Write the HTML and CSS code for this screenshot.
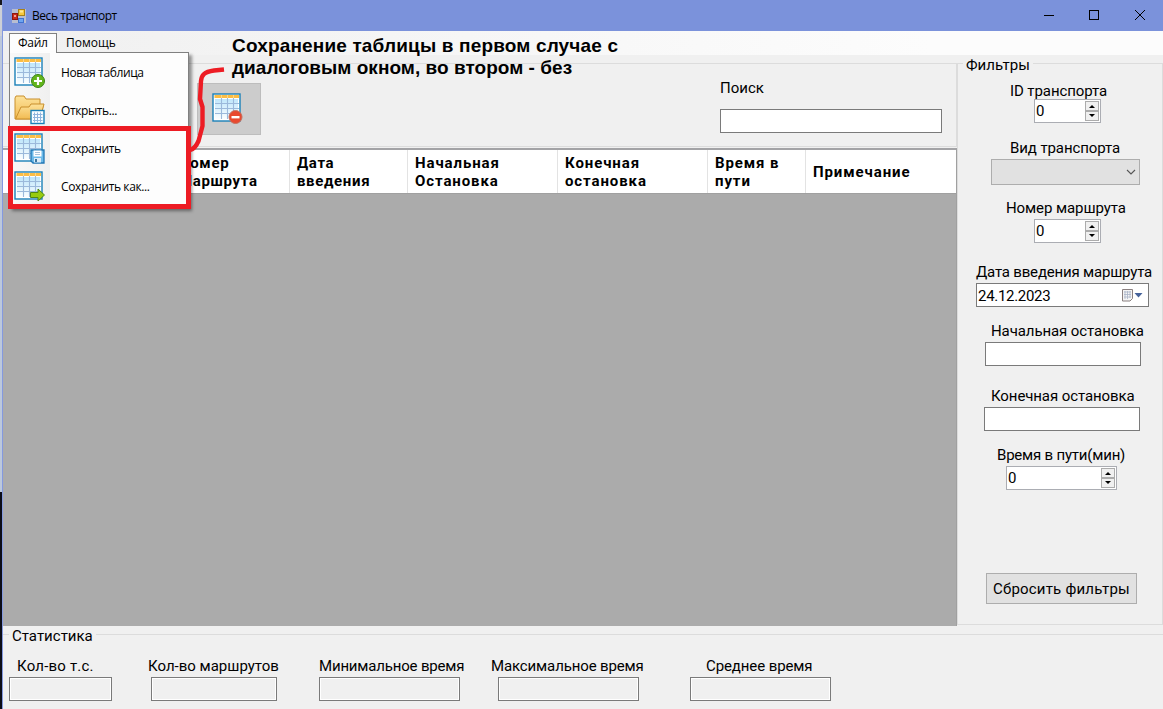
FILE: index.html
```html
<!DOCTYPE html>
<html lang="ru">
<head>
<meta charset="utf-8">
<title>Весь транспорт</title>
<link rel="stylesheet" href="styles.css">
</head>
<body>
<svg class="defs" width="0" height="0">
  <defs>
    <linearGradient id="sky" x1="0" y1="0" x2="0" y2="1"><stop offset="0" stop-color="#bfe6fb"/><stop offset="1" stop-color="#fbfeff"/></linearGradient>
    <linearGradient id="gold" x1="0" y1="0" x2="0" y2="1"><stop offset="0" stop-color="#fde29a"/><stop offset="1" stop-color="#f2bb52"/></linearGradient>
    <g id="sheet">
      <rect x="1" y="2" width="27" height="27" fill="#fff" stroke="#1a80b8" stroke-width="1.4"/>
      <rect x="3" y="7" width="23" height="20" fill="url(#sky)"/>
      <rect x="2.500" y="3" width="24.500" height="3" fill="#fbbd45"/>
      <path d="M3 11.500H27M3 16.500H27M3 21.500H27M9.500 6V27M15.500 6V27M21.500 6V27" stroke="#9bb9db" stroke-width="1.100" fill="none"/>
      <path d="M9.500 3V6M15.500 3V6M21.500 3V6" stroke="#fbd88a" stroke-width="1"/>
    </g>
  </defs>
</svg>
<div class="desktop">
<div class="window">
  <header class="titlebar">
    <svg class="app-icon" width="14" height="14" viewBox="0 0 14 14">
      <rect x="0" y="0" width="14" height="14" fill="#b8bdd0"/>
      <rect x="0.500" y="4.500" width="5" height="6" fill="#c8281c" stroke="#8e1710"/><rect x="2" y="6" width="2" height="2" fill="#f0a090"/>
      <rect x="6.500" y="0.500" width="6" height="6" fill="#f8c83c" stroke="#a88018"/><rect x="8" y="1.500" width="3" height="2" fill="#fde89a"/>
      <rect x="6.500" y="9.500" width="5" height="4" fill="#6da4f0" stroke="#3f72d0"/>
    </svg>
    <span class="title">Весь транспорт</span>
    <svg class="controls" width="110" height="14" viewBox="0 0 110 14">
      <path d="M1 7.500H11" stroke="#000"/>
      <rect x="46.500" y="2.500" width="9" height="9" fill="none" stroke="#000"/>
      <path d="M92 2L102 12M102 2L92 12" stroke="#000" fill="none"/>
    </svg>
  </header>
  <nav class="menubar">
    <div class="menu-tab">Файл</div>
    <div class="menu-item">Помощь</div>
  </nav>
  <div class="workspace">
    <main class="left">
      <section class="toolbar">
        <button class="tool">
          <svg width="32" height="33" viewBox="0 0 32 33"><use href="#sheet"/><circle cx="23.500" cy="25" r="6.500" fill="#e8492f" stroke="#c4705f"/><rect x="19.500" y="24" width="8" height="2.400" fill="#fff"/></svg>
        </button>
        <div class="search"><label>Поиск</label><div class="box"></div></div>
      </section>
      <section class="grid">
        <div class="grid-head">
          <div class="cell c0"></div>
          <div class="cell c1"><span>Номер</span><span>Маршрута</span></div>
          <div class="cell c2"><span>Дата</span><span>введения</span></div>
          <div class="cell c3"><span>Начальная</span><span>Остановка</span></div>
          <div class="cell c3"><span>Конечная</span><span>остановка</span></div>
          <div class="cell c5"><span>Время в</span><span>пути</span></div>
          <div class="cell c6"><span>Примечание</span></div>
        </div>
      </section>
    </main>
    <aside class="filters">
      <div class="legend legend-filters">Фильтры</div>
      <div class="field f1"><label>ID транспорта</label><div class="spin"><span>0</span><i class="arrows"></i></div></div>
      <div class="field f2"><label>Вид транспорта</label><div class="combo"><svg width="10" height="6" viewBox="0 0 10 6"><path d="M1 1L5 5L9 1" fill="none" stroke="#555" stroke-width="1.100"/></svg></div></div>
      <div class="field f3"><label>Номер маршрута</label><div class="spin"><span>0</span><i class="arrows"></i></div></div>
      <div class="field f4"><label>Дата введения маршрута</label><div class="box date"><span>24.12.2023</span>
        <svg width="22" height="13" viewBox="0 0 22 13"><path d="M1.500 .5H11.500V9.500L9 12H1.500Z" fill="#f4f4f4" stroke="#8a8080"/><path d="M3 3H10M3 5.500H10M3 8H10M4 2V10M6.500 2V10M9 2V9" stroke="#a9b4c8" stroke-width=".8"/><path d="M13.500 4H21.500L17.500 8.500Z" fill="#46629a"/></svg></div></div>
      <div class="field f5"><label>Начальная остановка</label><div class="box"></div></div>
      <div class="field f6"><label>Конечная остановка</label><div class="box"></div></div>
      <div class="field f7"><label>Время в пути(мин)</label><div class="spin"><span>0</span><i class="arrows"></i></div></div>
      <button class="reset"><span>Сбросить фильтры</span></button>
    </aside>
  </div>
  <footer class="stats">
    <div class="legend legend-stats">Статистика</div>
    <div class="stat-row">
      <div class="stat s1"><label>Кол-во т.с.</label><div class="box"></div></div>
      <div class="stat s2"><label>Кол-во маршрутов</label><div class="box"></div></div>
      <div class="stat s3"><label>Минимальное время</label><div class="box"></div></div>
      <div class="stat s4"><label>Максимальное время</label><div class="box"></div></div>
      <div class="stat s5"><label>Среднее время</label><div class="box"></div></div>
    </div>
  </footer>
</div>
<div class="dropdown">
  <div class="entry"><svg width="32" height="33" viewBox="0 0 32 33"><use href="#sheet"/><circle cx="24" cy="25" r="6.500" fill="#62b51c" stroke="#3c8418"/><path d="M24 21V29M20 25H28" stroke="#fff" stroke-width="2.200"/></svg><span>Новая таблица</span></div>
  <div class="entry"><svg width="32" height="33" viewBox="0 0 32 33"><path d="M1 25V4L2 2H10L12 5H26V12H29L27 25Z" fill="url(#gold)" stroke="#c98f2c"/><path d="M1.500 25L7 13H15L17 10H30L26 25Z" fill="url(#gold)" stroke="#c98f2c"/><rect x="17" y="16.500" width="13" height="13" fill="#f7fcff" stroke="#1a80b8" stroke-width="1.400"/><path d="M19 20.500H28.500M19 23.500H28.500M19 26.500H28.500M20.500 18.500V28.500M23.500 18.500V28.500M26.500 18.500V28.500" stroke="#8fb4dc"/></svg><span>Открыть...</span></div>
  <div class="entry"><svg width="32" height="33" viewBox="0 0 32 33"><use href="#sheet"/><path d="M17 18H30V31H19L17 29Z" fill="#6dbbea" stroke="#2277b4" stroke-width="1.300"/><rect x="19.500" y="18.500" width="8" height="6" fill="#fff"/><path d="M21 20.500H26M21 22.500H26" stroke="#a8c4dc"/><rect x="20" y="26" width="7" height="4.500" fill="#dcecf8"/><rect x="21" y="27" width="2" height="3" fill="#3c759e"/></svg><span>Сохранить</span></div>
  <div class="entry"><svg width="32" height="33" viewBox="0 0 32 33"><use href="#sheet"/><path d="M16.500 22.500H24V19L30.500 25L24 31V27.500H16.500Z" fill="#98cb10" stroke="#4f8715"/></svg><span>Сохранить как...</span></div>
</div>
<div class="highlight"></div>
<svg class="pointer" width="50" height="100" viewBox="185 60 50 100"><path d="M224 69.500L214 70.500C204 72 201.500 75 201 81L200 99L202.500 107V126L198.500 141Q195 149 190 150" fill="none" stroke="#ed1c24" stroke-width="4.400" stroke-linejoin="round"/></svg>
<div class="caption"><div class="cap1">Сохранение таблицы в первом случае с</div><div class="cap2">диалоговым окном, во втором - без</div></div>
</div>
</body>
</html>
```
FILE: styles.css
```css
* { box-sizing: border-box; }
body { margin: 0; overflow: hidden; background: #f0f0f0; color: #000; font-family: Roboto, sans-serif; font-size: 15px; }
.defs { position: absolute; }
.desktop { position: relative; width: 1163px; height: 709px; padding-left: 2px; background: linear-gradient(#15161c 0 5px, #cdd0d6 5px 36px, #bcc8dc 36px 492px, #0c0d18 492px); }
.window { display: flex; flex-direction: column; height: 709px; background: #f0f0f0; border-left: 1px solid #8499df; }
.titlebar { display: flex; align-items: center; height: 31px; flex: none; background: #7b92db; padding: 0 10px 0 9px; }
.title { margin-left: 6px; font: 12px "Open Sans", sans-serif; letter-spacing: -.45px; }
.controls { margin-left: auto; margin-top: -1px; }
.menubar { display: flex; height: 24px; flex: none; padding: 2px 0 0 6px; background: linear-gradient(90deg, #f0f0f0, #fcfcfc 80%); font: 12px/20px "Open Sans", sans-serif; }
.menu-tab { width: 48px; padding-left: 8px; border: 1px solid #808080; border-bottom: 0; background: #fdfdfd; line-height: 18px; letter-spacing: -.3px; }
.menu-item { margin-left: 9px; }
.workspace { display: flex; height: 571px; flex: none; }
.left { width: 954px; display: flex; flex-direction: column; }
.toolbar { display: flex; justify-content: space-between; align-items: flex-start; height: 84px; margin-top: 8px; padding: 19px 14px 0 194px; border: 1px solid #dcdcdc; border-width: 1px 1px 1px 0; }
.tool { width: 64px; height: 52px; padding: 0 2px 2px 0; border: 1px solid #bdbdbd; background: #ccc; display: grid; place-items: center; }
.search { width: 222px; margin-top: -4px; }
.search label { display: block; height: 30px; line-height: 18px; }
.box { height: 24px; border: 1px solid #7a7a7a; background: #fff; }
.grid { flex: 1; margin-top: 1px; background: #ababab; border-top: 2px solid #a3a3a6; border-right: 1px solid #a0a0a0; }
.grid-head { display: flex; height: 44px; background: #fff; border-bottom: 1px solid #a0a0a0; font-weight: 700; line-height: 18px; letter-spacing: .9px; }
.cell { display: flex; flex-direction: column; justify-content: center; padding-left: 7px; border-right: 1px solid #e3e3e3; white-space: nowrap; }
.cell span { width: max-content; }
.c0 { width: 169px; }
.c1 { width: 118px; letter-spacing: .65px; }
.c2 { width: 118px; letter-spacing: .65px; }
.c3 { width: 150px; }
.c5 { width: 98px; }
.c6 { flex: 1; border: 0; }
.filters { flex: 1; height: 562px; margin-top: 8px; border: 1px solid #dcdcdc; }
.legend { width: max-content; background: #f0f0f0; line-height: 16px; height: 16px; }
.legend-filters { margin: -7px 0 0 5px; padding: 0 3px; }
.field label { display: block; height: 20px; line-height: 18px; white-space: nowrap; letter-spacing: -.09px; }
.f1 { margin: 8px 0 0 76px; } .f1 label { height: 18px; line-height: 20px; margin-left: -24px; }
.f2 { margin: 16px 0 0 33px; } .f2 label { margin-left: 19px; }
.f3 { margin: 14px 0 0 76px; } .f3 label { margin-left: -28px; }
.f4 { margin: 20px 0 0 18px; } .f4 label { letter-spacing: -.19px; }
.f5 { margin: 15px 0 0 27px; } .f5 label { margin-left: 6px; }
.f6 { margin: 21px 0 0 26px; } .f6 label { margin-left: 7px; }
.f7 { margin: 15px 0 0 48px; } .f7 label { margin-left: -9px; letter-spacing: -.2px; }
.f5 .box, .f6 .box { width: 156px; }
.spin { display: flex; justify-content: space-between; width: 67px; height: 24px; padding: 1px; border: 1px solid #abadb3; background: #fff; line-height: 21px; }
.f7 .spin { width: 111px; }
.arrows { position: relative; width: 14px; background: linear-gradient(#acacac, #acacac) 0 8px/14px 2px no-repeat, #f0f0f0; border: 1px solid #acacac; }
.arrows::before, .arrows::after { content: ""; position: absolute; left: 3px; border: 3px solid transparent; }
.arrows::before { top: 0; border-bottom-color: #000; }
.arrows::after { bottom: 0; border-top-color: #000; }
.combo { width: 149px; height: 26px; padding-right: 3px; display: flex; align-items: center; justify-content: flex-end; border: 1px solid #adadad; background: #e1e1e1; }
.date { width: 173px; display: flex; align-items: center; justify-content: space-between; padding: 0 5px 0 1px; letter-spacing: -.3px; }
.date span { padding-top: 2px; }
.reset { display: block; width: 151px; height: 31px; margin: 83px 0 0 28px; padding: 0; border: 1px solid #adadad; background: #e1e1e1; font: 15px Roboto, sans-serif; letter-spacing: .2px; white-space: nowrap; color: #000; }
.stats { flex: 1; margin-top: 8px; border-top: 1px solid #dcdcdc; }
.legend-stats { margin: -7px 0 0 6px; padding: 0 3px; }
.stat-row { display: flex; margin: 14px 0 0 6px; }
.stat label { display: block; height: 19px; line-height: 16px; white-space: nowrap; }
.stat .box { background: #f0f0f0; box-shadow: inset 0 0 0 1px #fff; }
.s1 { width: 103px; } .s1 label { margin-left: 8px; letter-spacing: .2px; }
.s2 { width: 126px; margin-left: 39px; } .s2 label { margin-left: -3px; }
.s3 { width: 141px; margin-left: 42px; } .s3 label { letter-spacing: -.18px; }
.s4 { width: 141px; margin-left: 38px; } .s4 label { margin-left: -7px; letter-spacing: -.13px; }
.s5 { width: 141px; margin-left: 51px; } .s5 label { margin-left: 16px; letter-spacing: -.1px; }
.dropdown { position: absolute; left: 9px; top: 52px; width: 180px; height: 156px; padding: 0 0 0 4px; border: 1px solid #808080; background: linear-gradient(90deg, #f8f8f8, #f0f0f0) 0 0/40px 100% no-repeat, #fdfdfd; box-shadow: 3px 3px 3px rgba(0,0,0,.4); font: 12px "Open Sans", sans-serif; letter-spacing: -.38px; }
.dropdown::before { content: ""; position: absolute; left: 0; top: -1px; width: 46px; height: 1px; background: #fdfdfd; }
.entry { display: flex; align-items: center; height: 38px; gap: 15px; }
.entry svg { flex: none; }
.highlight { position: absolute; left: 8px; top: 126px; width: 183px; height: 83px; border: 5px solid #ed1c24; }
.pointer { position: absolute; left: 185px; top: 60px; }
.caption { position: absolute; left: 232px; top: 35px; font: bold 19px/22px "Liberation Sans", sans-serif; white-space: nowrap; }
.cap1 { letter-spacing: .16px; }
.cap2 { letter-spacing: .04px; }
```
